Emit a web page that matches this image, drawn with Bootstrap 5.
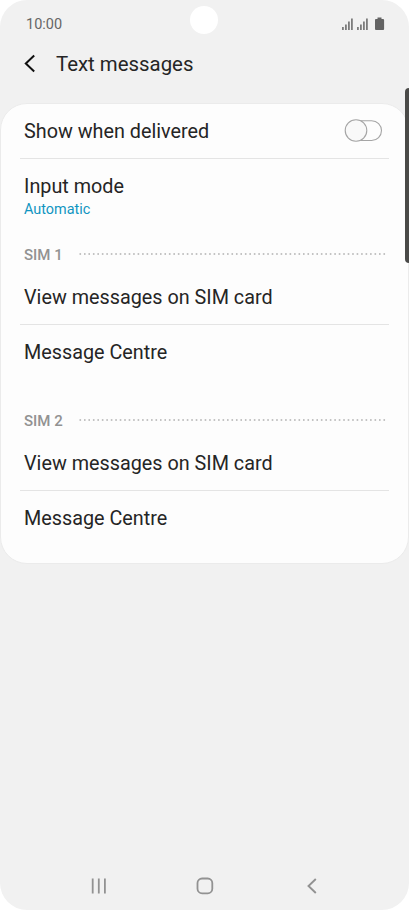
<!DOCTYPE html>
<html lang="en">
<head>
  <meta charset="UTF-8" />
  <meta name="viewport" content="width=device-width, initial-scale=1.0"/>
  <title>Text messages</title>
  <link href="https://cdn.jsdelivr.net/npm/bootstrap@5.3.3/dist/css/bootstrap.min.css" rel="stylesheet">
  <style>
    body {
      background-color: #fff;
      font-family: Roboto, sans-serif;
      color: #252525;
    }
    .phone {
      width: 409px;
      height: 910px;
      background-color: #f1f1f1;
      border-radius: 27px;
    }
    .status-bar {
      height: 48px;
      padding: 0 24px 0 26px;
      font-size: 14.5px;
      color: #666;
    }
    .status-bar span {
      padding-top: 2px;
    }
    /* front camera */
    .camera {
      top: 6px;
      left: 190px;
      width: 28px;
      height: 28px;
      background-color: #fff;
    }
    .title-bar {
      height: 32px;
      margin-bottom: 23px;
      padding-left: 23px;
    }
    .title-bar h1 {
      margin: 0 0 0 19px;
      font-size: 20.4px;
      font-weight: 400;
    }
    .title-bar svg {
      margin-top: -1px;
    }
    .settings-panel {
      height: 461px;
      background-color: #fdfdfd;
      border: 1px solid #ebebeb;
      border-radius: 27px;
      font-size: 19.8px;
    }
    .setting {
      height: 54px;
      margin: 0 19px;
      padding: 2px 6px 0 4px;
    }
    .setting svg {
      margin-top: -2px;
    }
    .setting.divided {
      height: 55px;
      border-bottom: 1px solid #e4e4e4;
    }
    .input-mode {
      padding: 15px 23px 0;
    }
    .input-mode div {
      line-height: 26px;
    }
    .input-mode .value {
      font-size: 14.4px;
      line-height: 20px;
      color: #1095c1;
    }
    .sim-title {
      height: 32px;
      padding-left: 23px;
      font-size: 15px;
      font-weight: 500;
      color: #929292;
    }
    .sim-title span {
      width: 55px;
      padding-top: 2px;
    }
    .edge-handle {
      top: 88px;
      right: 0;
      width: 4px;
      height: 175px;
      background-color: #4a4a48;
      border-radius: 4px 0 0 4px;
    }
    .nav-keys {
      height: 48px;
      padding: 0 91px;
    }
    .home-key {
      margin-right: 3px;
    }
  </style>
</head>
<body>

  <div class="phone position-relative overflow-hidden d-flex flex-column">
    <div class="camera position-absolute rounded-circle"></div>

    <!-- Status bar -->
    <div class="status-bar d-flex align-items-center justify-content-between">
      <span>10:00</span>
      <svg width="43" height="14" fill="#7c7c7c">
        <path d="M0 10h1.800v3H0zM3 7.500h1.800V13H3zM6 4.500h1.800V13H6zM9 1.500h1.800V13H9z"/>
        <path d="M15 10h1.800v3H15zM18 7.500h1.800V13H18zM21 4.500h1.800V13H21zM24 1.500h1.800V13H24z"/>
        <path fill="#636363" d="M35.500 .6h4v1.400h1.500q1.100 0 1.100.9V12q0 1-1 1h-7.100q-1 0-1-1V3q0-.9.900-1h1.600z"/>
      </svg>
    </div>

    <!-- Header -->
    <div class="title-bar d-flex align-items-center">
      <svg width="14" height="20" fill="none" stroke="#111" stroke-width="2">
        <path d="M11.200 1.500 2.800 9.500l8.400 8"/>
      </svg>
      <h1>Text messages</h1>
    </div>

    <!-- Settings -->
    <div class="settings-panel">
      <div class="setting divided d-flex align-items-center justify-content-between">
        <span>Show when delivered</span>
        <svg width="39" height="24" fill="#fdfdfd" stroke="#a5a5a5" stroke-width="1.100">
          <rect x="2" y="1.700" width="35.500" height="19.800" rx="9.900"/>
          <circle cx="12" cy="11.500" r="10.800" fill="#f9f9f9"/>
        </svg>
      </div>
      <div class="input-mode">
        <div>Input mode</div>
        <div class="value">Automatic</div>
      </div>

      <div class="sim-title d-flex align-items-center" style="margin-top: 18px">
        <span>SIM 1</span>
        <svg width="309" height="4"><path d="M.5 2H308" stroke="#b0b0b0" stroke-width="1.600" stroke-dasharray="1.600 2.870"/></svg>
      </div>
      <div class="setting divided d-flex align-items-center">View messages on SIM card</div>
      <div class="setting d-flex align-items-center">Message Centre</div>

      <div class="sim-title d-flex align-items-center" style="margin-top: 25px">
        <span>SIM 2</span>
        <svg width="309" height="4"><path d="M.5 2H308" stroke="#b0b0b0" stroke-width="1.600" stroke-dasharray="1.600 2.870"/></svg>
      </div>
      <div class="setting divided d-flex align-items-center">View messages on SIM card</div>
      <div class="setting d-flex align-items-center">Message Centre</div>
    </div>

    <div class="edge-handle position-absolute"></div>

    <!-- Navigation keys -->
    <div class="nav-keys mt-auto d-flex align-items-center justify-content-between">
      <svg width="16" height="18" stroke="#929292" stroke-width="1.800">
        <path d="M1.700 1.500v15M7.800 1.500v15M13.900 1.500v15"/>
      </svg>
      <svg class="home-key" width="18" height="18" fill="none" stroke="#929292" stroke-width="1.800">
        <rect x="1.500" y="1.500" width="14.800" height="14.800" rx="4.600"/>
      </svg>
      <svg width="12" height="18" fill="none" stroke="#929292" stroke-width="1.900">
        <path d="M9.800 2 2.500 9l7.300 7"/>
      </svg>
    </div>
  </div>

  <script src="https://cdn.jsdelivr.net/npm/bootstrap@5.3.3/dist/js/bootstrap.bundle.min.js"></script>
</body>
</html>
